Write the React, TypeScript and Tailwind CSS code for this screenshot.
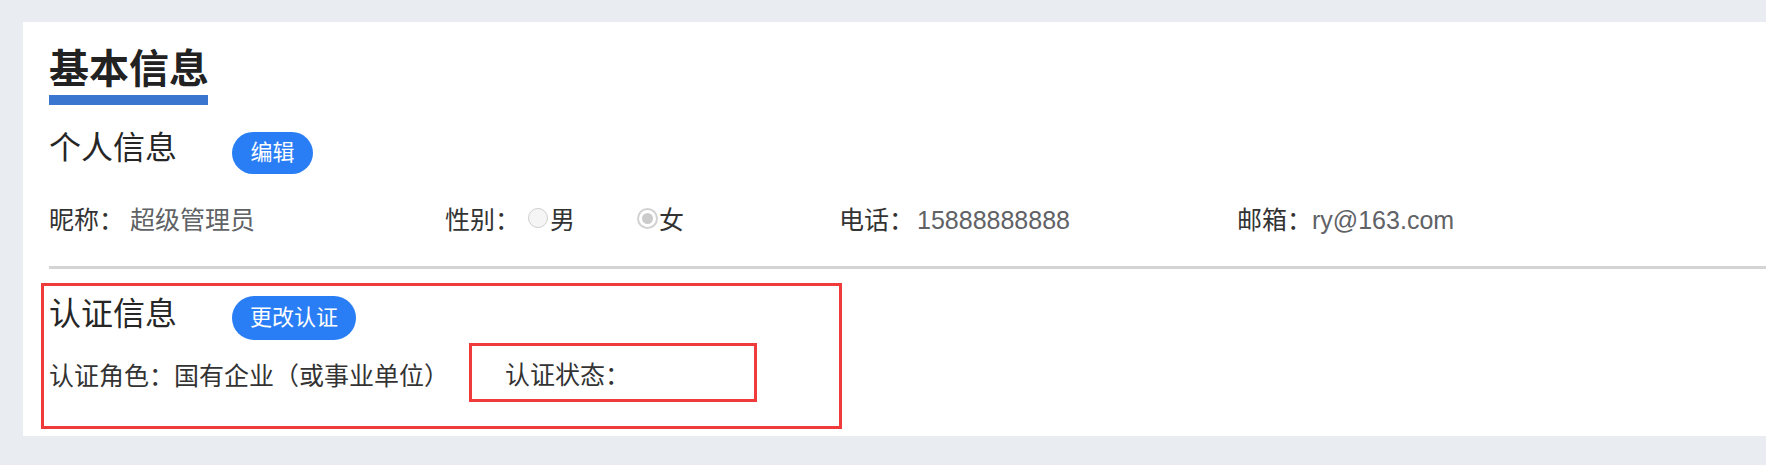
import React from "react";

const font = "font-['Liberation_Sans','Noto_Sans_CJK_SC',sans-serif]";

function Radio({ checked }: { checked?: boolean }) {
  if (checked) {
    return (
      <span className="flex h-[21px] w-[21px] shrink-0 items-center justify-center rounded-full border-2 border-[#d2d2d2] bg-white">
        <span className="h-[11px] w-[11px] rounded-full bg-[#cbcbcb]" />
      </span>
    );
  }
  return <span className="h-[20px] w-[20px] shrink-0 rounded-full border border-[#cfcfcf] bg-[#f5f5f5]" />;
}

export default function App() {
  return (
    <div className={`${font} h-[465px] w-full overflow-hidden bg-[#e9ecf1] pl-[23px] pt-[22px]`}>
      <div className="flex flex-col bg-white pb-[7px] pl-[26px] pt-[27px]">
        {/* Title */}
        <div className="flex w-[159px] flex-col">
          <span className="whitespace-nowrap text-[40px] font-bold leading-[40px] text-[#222]">基本信息</span>
          <div className="mt-[6px] h-[10px] w-[159px] bg-[#3a76cf]" />
        </div>

        {/* 个人信息 header */}
        <div className="mt-[27px] flex items-start">
          <span className="w-[183px] whitespace-nowrap text-[32px] leading-[32px] text-[#262626]">个人信息</span>
          <button className="flex h-[42px] w-[81px] items-center justify-center rounded-full bg-[#2a7ef5] text-[22px] leading-[22px] text-white">
            编辑
          </button>
        </div>

        {/* info row */}
        <div className="mt-[34px] grid grid-cols-[396px_394px_398px_396px] text-[25px] leading-[25px]">
          <div className="flex items-start whitespace-nowrap">
            <span className="text-[#333]">昵称：</span>
            <span className="ml-[6px] text-[#606266]">超级管理员</span>
          </div>
          <div className="flex items-start whitespace-nowrap">
            <span className="text-[#333]">性别：</span>
            <span className="ml-[8px] flex items-start">
              <Radio />
              <span className="ml-[2px] text-[#333]">男</span>
            </span>
            <span className="ml-[62px] flex items-start">
              <Radio checked />
              <span className="ml-[1px] text-[#333]">女</span>
            </span>
          </div>
          <div className="flex items-start whitespace-nowrap">
            <span className="text-[#333]">电话：</span>
            <span className="ml-[3px] text-[#606266]">15888888888</span>
          </div>
          <div className="flex items-start whitespace-nowrap">
            <span className="text-[#333]">邮箱：</span>
            <span className="ml-[0px] text-[#606266]">ry@163.com</span>
          </div>
        </div>

        {/* divider */}
        <div className="mt-[33px] h-[3px] w-full bg-[#d4d4d4]" />

        {/* 认证信息 */}
        <div className="-ml-[8px] mt-[14px] flex h-[146px] w-[801px] flex-col border-[3px] border-[#f03b3b] pb-[24px] pl-[5px] pt-[10px]">
          <div className="flex items-start">
            <span className="mt-[2px] w-[183px] whitespace-nowrap text-[32px] leading-[32px] text-[#262626]">认证信息</span>
            <button className="flex h-[44px] w-[124px] items-center justify-center rounded-full bg-[#2a7ef5] text-[22px] leading-[22px] text-white">
              更改认证
            </button>
          </div>
          <div className="mt-[3px] flex items-start text-[25px] leading-[25px]">
            <span className="mt-[21px] whitespace-nowrap text-[#333]">认证角色：国有企业（或事业单位）</span>
            <div className="ml-[20px] h-[59px] w-[288px] border-[3px] border-[#f03b3b] pl-[33px] pt-[17px]">
              <span className="whitespace-nowrap text-[#333]">认证状态：</span>
            </div>
          </div>
        </div>
      </div>
    </div>
  );
}
